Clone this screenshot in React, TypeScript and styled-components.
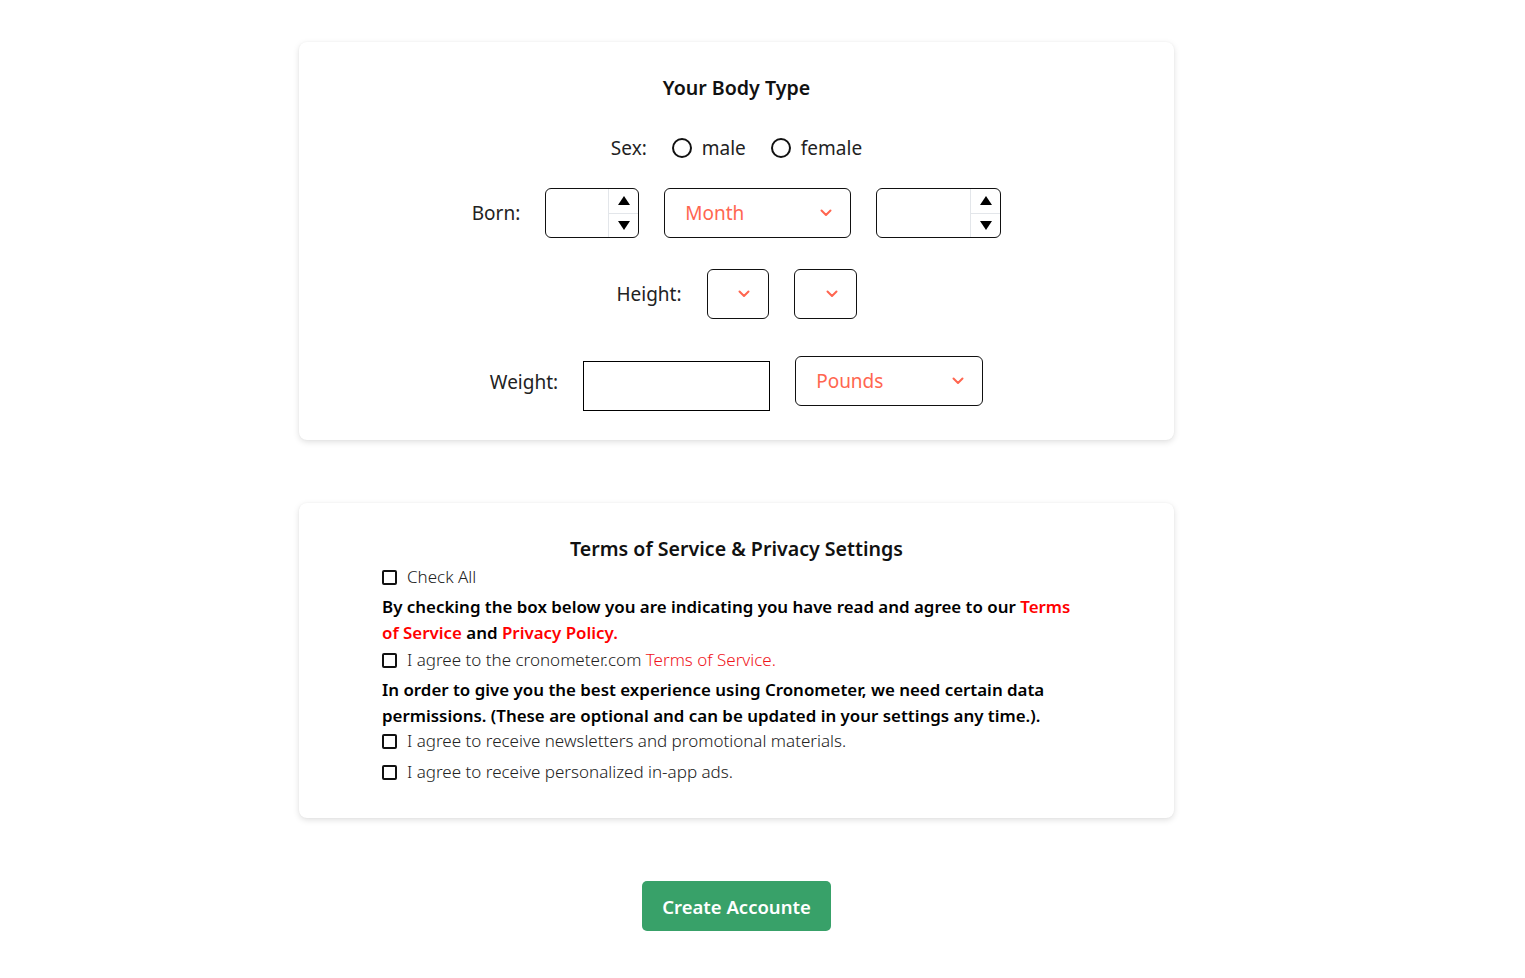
import React from "react";
import styled, { createGlobalStyle } from "styled-components";

const Global = createGlobalStyle`
  html, body { margin: 0; padding: 0; background: #fff; }
  body { font-family: "Segoe UI", "Noto Sans", "Liberation Sans", sans-serif; color: #111; }
  * { box-sizing: border-box; }
`;

const Page = styled.div`
  display: flex;
  flex-direction: column;
  align-items: center;
  padding: 42px 52px 40px 0;
`;

const Card = styled.section<{ $top?: number; $pb: number }>`
  width: 875px;
  background: #fff;
  border-radius: 8px;
  box-shadow: 0 2px 6px rgba(0, 0, 0, 0.13), 0 0 2px rgba(0, 0, 0, 0.04);
  padding: 32px 0 ${(p) => p.$pb}px;
  margin-top: ${(p) => p.$top ?? 0}px;
  display: flex;
  flex-direction: column;
`;

const Title = styled.h2`
  margin: 0;
  font-size: 19.6px;
  line-height: 28px;
  font-weight: 600;
  text-align: center;
  color: #111;
`;

const Row = styled.div<{ $mt: number; $top?: boolean }>`
  display: flex;
  justify-content: center;
  align-items: ${(p) => (p.$top ? "flex-start" : "center")};
  gap: 25px;
  margin-top: ${(p) => p.$mt}px;
`;

const Label = styled.span<{ $mt?: number }>`
  font-size: 19px;
  line-height: 28px;
  color: #222;
  margin-top: ${(p) => p.$mt ?? 0}px;
`;

const RadioGroup = styled.label`
  display: inline-flex;
  align-items: center;
  gap: 10px;
  font-size: 19px;
  line-height: 28px;
  color: #222;
`;

const RadioCircle = styled.span`
  width: 20px;
  height: 20px;
  border: 2px solid #111;
  border-radius: 50%;
  display: inline-block;
`;

const NumberBox = styled.div<{ $w: number }>`
  width: ${(p) => p.$w}px;
  height: 50px;
  border: 1px solid #111;
  border-radius: 6px;
  display: flex;
  overflow: hidden;
`;

const NumberField = styled.div`
  flex: 1;
`;

const Spinner = styled.div`
  width: 30px;
  border-left: 1px solid #e3e6ea;
  display: flex;
  flex-direction: column;
`;

const SpinHalf = styled.div<{ $down?: boolean }>`
  flex: 1;
  display: flex;
  align-items: center;
  justify-content: center;
  border-top: ${(p) => (p.$down ? "1px solid #e3e6ea" : "none")};
`;

const SelectBox = styled.div<{ $w: number }>`
  width: ${(p) => p.$w}px;
  height: 50px;
  border: 1px solid #111;
  border-radius: 6px;
  display: flex;
  align-items: center;
  justify-content: space-between;
  padding: 0 18px 0 20px;
  font-size: 19px;
  color: #ff6650;
`;

const PlainInput = styled.div`
  width: 187px;
  height: 50px;
  border: 1px solid #000;
  margin-top: 5px;
`;

const Content = styled.div`
  padding: 0 83px;
  display: flex;
  flex-direction: column;
`;

const CheckRow = styled.label<{ $mt: number }>`
  display: flex;
  align-items: center;
  gap: 10px;
  margin-top: ${(p) => p.$mt}px;
  font-size: 17px;
  line-height: 24px;
  font-weight: 300;
  color: #222;
`;

const Box = styled.span`
  width: 15px;
  height: 15px;
  border: 2px solid #111;
  border-radius: 2px;
  flex: none;
`;

const Para = styled.p<{ $mt: number }>`
  margin: ${(p) => p.$mt}px 0 0;
  font-size: 16.9px;
  line-height: 25.5px;
  font-weight: 600;
  color: #000;
`;

const Red = styled.span<{ $light?: boolean }>`
  color: ${(p) => (p.$light ? "#f0141c" : "#ff0000")};
`;

const Button = styled.button`
  margin-top: 63px;
  width: 189px;
  height: 50px;
  border: none;
  border-radius: 5px;
  background: #38a169;
  color: #fff;
  font-family: inherit;
  font-size: 18.5px;
  font-weight: 600;
  cursor: pointer;
`;

const Chevron = () => (
  <svg width="12" height="8" viewBox="0 0 12 8" fill="none">
    <path d="M1.5 1.5 L6 6 L10.5 1.5" stroke="#ff6650" strokeWidth="2" strokeLinecap="round" strokeLinejoin="round" />
  </svg>
);

const Up = () => (
  <svg width="12" height="9" viewBox="0 0 12 9">
    <path d="M6 0 L12 9 L0 9 Z" fill="#000" />
  </svg>
);
const Down = () => (
  <svg width="12" height="9" viewBox="0 0 12 9">
    <path d="M0 0 L12 0 L6 9 Z" fill="#000" />
  </svg>
);

const NumberInput = ({ w }: { w: number }) => (
  <NumberBox $w={w}>
    <NumberField />
    <Spinner>
      <SpinHalf>
        <Up />
      </SpinHalf>
      <SpinHalf $down>
        <Down />
      </SpinHalf>
    </Spinner>
  </NumberBox>
);

const Select = ({ w, text }: { w: number; text?: string }) => (
  <SelectBox $w={w}>
    <span>{text ?? ""}</span>
    <Chevron />
  </SelectBox>
);

export default function App() {
  return (
    <>
      <Global />
      <Page>
        <Card $pb={29}>
          <Title>Your Body Type</Title>
          <Row $mt={32}>
            <Label>Sex:</Label>
            <RadioGroup>
              <RadioCircle />
              male
            </RadioGroup>
            <RadioGroup>
              <RadioCircle />
              female
            </RadioGroup>
          </Row>
          <Row $mt={26}>
            <Label>Born:</Label>
            <NumberInput w={94} />
            <Select w={187} text="Month" />
            <NumberInput w={125} />
          </Row>
          <Row $mt={31}>
            <Label>Height:</Label>
            <Select w={62} />
            <Select w={63} />
          </Row>
          <Row $mt={37} $top>
            <Label $mt={12}>Weight:</Label>
            <PlainInput />
            <Select w={188} text="Pounds" />
          </Row>
        </Card>

        <Card $top={63} $pb={34}>
          <Title>Terms of Service &amp; Privacy Settings</Title>
          <Content>
            <CheckRow $mt={2}>
              <Box />
              Check All
            </CheckRow>
            <Para $mt={5}>
              By checking the box below you are indicating you have read and agree to our{" "}
              <Red>Terms of Service</Red> and <Red>Privacy Policy.</Red>
            </Para>
            <CheckRow $mt={3}>
              <Box />
              <span>
                I agree to the cronometer.com <Red $light>Terms of Service.</Red>
              </span>
            </CheckRow>
            <Para $mt={5}>
              In order to give you the best experience using Cronometer, we need certain data
              permissions. (These are optional and can be updated in your settings any time.).
            </Para>
            <CheckRow $mt={1}>
              <Box />
              I agree to receive newsletters and promotional materials.
            </CheckRow>
            <CheckRow $mt={7}>
              <Box />
              I agree to receive personalized in-app ads.
            </CheckRow>
          </Content>
        </Card>

        <Button>Create Accounte</Button>
      </Page>
    </>
  );
}
